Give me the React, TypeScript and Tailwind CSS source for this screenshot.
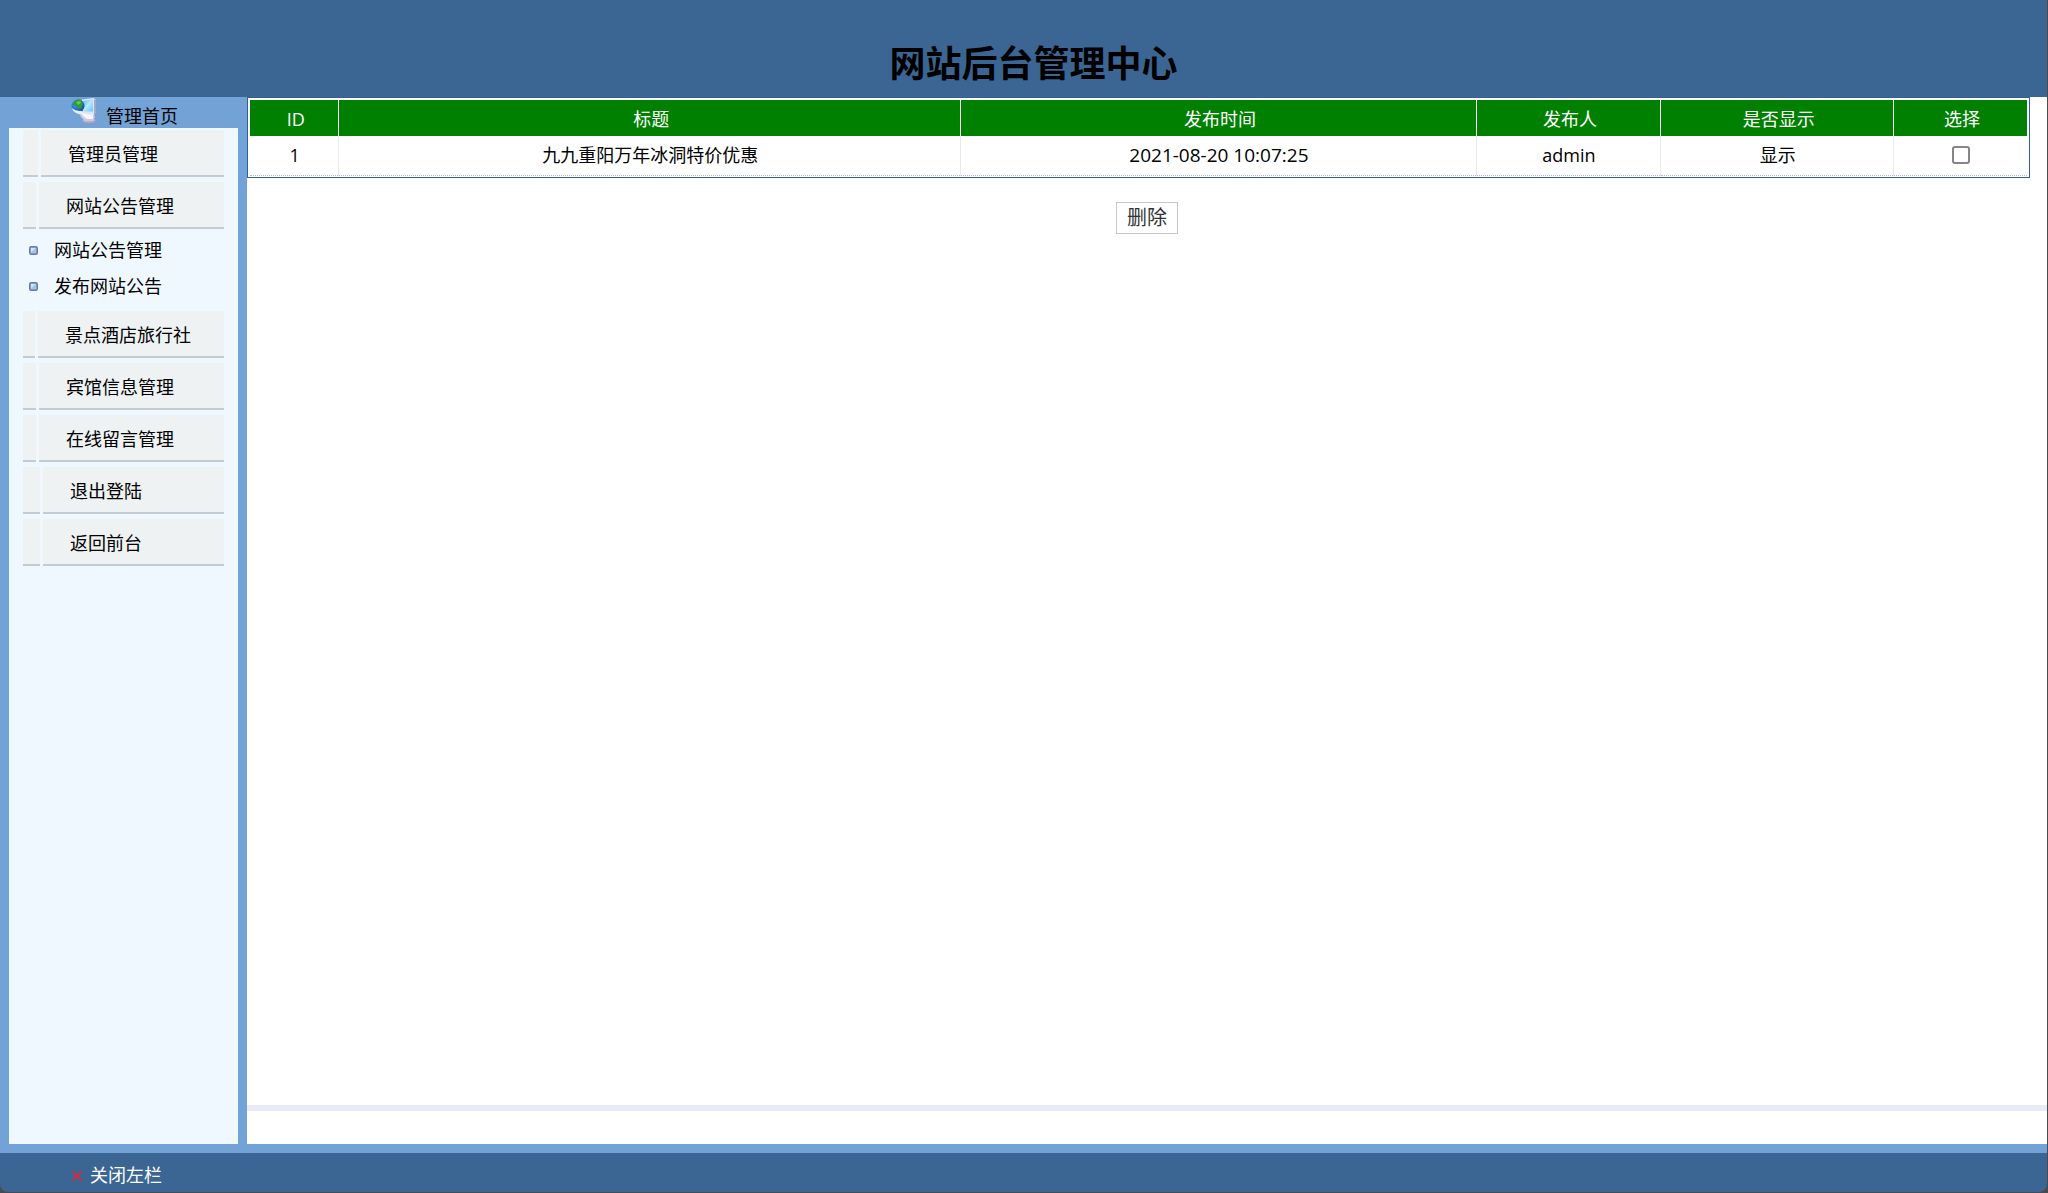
import { Fragment } from "react";

const MENU = [
  { label: "管理员管理", tab: "w-[15px]" },
  { label: "网站公告管理", tab: "w-[13px]", children: ["网站公告管理", "发布网站公告"] },
  { label: "景点酒店旅行社", tab: "w-[12px]" },
  { label: "宾馆信息管理", tab: "w-[13px]" },
  { label: "在线留言管理", tab: "w-[13px]" },
  { label: "退出登陆", tab: "w-[17px]" },
  { label: "返回前台", tab: "w-[17px]" },
];

const COLUMNS = [
  { label: "ID", width: "w-[5%]" },
  { label: "标题", width: "w-[35%]" },
  { label: "发布时间", width: "w-[29%]" },
  { label: "发布人", width: "w-[10.4%]" },
  { label: "是否显示", width: "w-[13.1%]" },
  { label: "选择", width: "w-[7.5%]" },
];

const NOTICES = [
  { id: 1, title: "九九重阳万年冰洞特价优惠", time: "2021-08-20 10:07:25", author: "admin", visible: "显示" },
];

function ComputerIcon() {
  return (
    <svg className="mt-[1px] size-[26px] shrink-0" viewBox="0 0 26 26" aria-hidden="true">
      <defs>
        <linearGradient id="screen" x1="0" y1="0" x2="1" y2="1">
          <stop offset="0" stopColor="#58b4f4" />
          <stop offset="0.5" stopColor="#b4e8fd" />
          <stop offset="1" stopColor="#6cc0f6" />
        </linearGradient>
        <radialGradient id="globe" cx="0.3" cy="0.35" r="0.8">
          <stop offset="0" stopColor="#3f9fe0" />
          <stop offset="0.6" stopColor="#1f66c4" />
          <stop offset="1" stopColor="#174a9c" />
        </radialGradient>
      </defs>
      {/* base and stand */}
      <ellipse cx="18" cy="22.500" rx="6.500" ry="2.500" fill="#c3a9bf" />
      <path d="M7 13l3 6 4 4 8 0 2-4-2-4z" fill="#cfc9e0" />
      <path d="M9 14l4 5 3 2 6 0 0-6z" fill="#f7f4fa" />
      {/* monitor */}
      <path d="M11 1.500l12-1.500 2 2v12l-2 3-11-1.500z" fill="#dbe5f4" />
      <path d="M23 1l2 1v12l-2 3z" fill="#9fa9cc" />
      <path d="M11.500 3l10.500-1.500v12l-9.500 0z" fill="url(#screen)" />
      {/* globe */}
      <circle cx="7" cy="8" r="6.500" fill="url(#globe)" />
      <path d="M3 4c2-3 6-3 8-1l1 4-2 3-3 1-1-3-4-1z" fill="#2f9a3a" />
      <path d="M5 4l4-1 1 2-3 2z" fill="#6cc94f" />
      <path d="M1 10c1 4 5 6 9 6l3-2-3-1c-4 0-7-1-9-3z" fill="#e4eefb" />
    </svg>
  );
}

function Bullet() {
  return (
    <svg className="size-[9px] shrink-0" viewBox="0 0 9 9" aria-hidden="true">
      <rect x="0.75" y="0.75" width="7.500" height="7.500" rx="1.500" fill="#a3c2f2" stroke="#68779f" strokeWidth="1.500" />
      <path d="M2 2h4.500L2 6.500z" fill="#d3e4fc" />
    </svg>
  );
}

function Sidebar() {
  return (
    <aside className="flex w-[247px] shrink-0 flex-col bg-[#72a2d6] px-[9px] pb-[9px]">
      <a href="#home" className="flex h-[31px] pl-[62px]">
        <ComputerIcon />
        <span className="pt-2 pl-[9px] leading-[22px]">管理首页</span>
      </a>
      <nav className="flex grow flex-col gap-[5px] bg-[#eff7ff] px-[14px] pt-[2px]">
        {MENU.map((item) => (
          <Fragment key={item.label}>
            <a href="#menu" className="flex h-[47px] gap-[3px]">
              <span className={`${item.tab} border-b-2 border-[#c5cbd2] bg-[#eef2f3]`} />
              <span className="flex grow items-center border-b-2 border-[#c5cbd2] bg-[#eef2f3] pt-[2px] pl-[27px]">
                {item.label}
              </span>
            </a>
            {item.children && (
              <ul className="-mt-[2px] pb-[2px]">
                {item.children.map((child) => (
                  <li key={child}>
                    <a href="#submenu" className="flex h-9 items-center gap-4 pl-[6px]">
                      <Bullet />
                      <span>{child}</span>
                    </a>
                  </li>
                ))}
              </ul>
            )}
          </Fragment>
        ))}
      </nav>
    </aside>
  );
}

function NoticeTable() {
  return (
    <div className="mr-[17px] border border-[#2f5f9e] bg-white p-[2px] pb-[1px]">
      <table className="w-full table-fixed border-collapse text-center">
        <thead>
          <tr className="h-9 bg-[#008000] text-white">
            {COLUMNS.map((col) => (
              <th key={col.label} className={`${col.width} border-r border-white pt-[2px] pl-[3px] font-normal last:border-r-0`}>
                {col.label}
              </th>
            ))}
          </tr>
        </thead>
        <tbody>
          {NOTICES.map((row) => (
            <tr key={row.id} className="h-[39px] border-b border-dotted border-[#a9b9d6] *:border-r *:border-solid *:border-r-[#e8e8f0] *:pl-[1px] *:last:border-r-0">
              <td>{row.id}</td>
              <td>{row.title}</td>
              <td className="text-[19px]">{row.time}</td>
              <td>{row.author}</td>
              <td>{row.visible}</td>
              <td>
                <input
                  type="checkbox"
                  aria-label="选择"
                  className="mx-auto block size-[18px] appearance-none rounded-[3px] border-2 border-[#858585] bg-white"
                />
              </td>
            </tr>
          ))}
        </tbody>
      </table>
    </div>
  );
}

export default function App() {
  return (
    <div className="min-h-screen bg-[#4a4a4f] pr-px pb-px font-['Open_Sans','Noto_Sans_CJK_SC',sans-serif] text-[18px] leading-6 text-black">
      <div className="flex min-h-[calc(100vh-1px)] flex-col overflow-hidden rounded-b-lg">
        <header className="flex h-[97px] items-center justify-center bg-[#3b6592] pt-[31px] pl-5">
          <h1 className="text-[36px] leading-[48px] font-bold">网站后台管理中心</h1>
        </header>

        <div className="flex grow">
          <Sidebar />
          <div className="flex grow flex-col">
            <main className="grow bg-white">
              <NoticeTable />
              <div className="flex justify-center pt-6">
                <button type="button" className="h-8 border border-[#c8c8c8] bg-white px-[10px] pt-[1px] text-[20px] text-[#333]">
                  删除
                </button>
              </div>
            </main>
            <div className="h-[39px] border-t-[6px] border-[#e8eaf8] bg-white" />
            <div className="h-[9px] bg-[#72a2d6]" />
          </div>
        </div>

        <footer className="flex h-[39px] items-center bg-[#3b6592] pt-[4px] pl-[72px] text-white">
          <button type="button" className="flex items-center gap-[8px]">
            <svg className="mt-[2px] size-[10px]" viewBox="0 0 10 10" aria-hidden="true">
              <path d="M0.500 0.500l9 9M9.500 0.500l-9 9" stroke="#ff1c28" strokeWidth="1.500" fill="none" />
            </svg>
            关闭左栏
          </button>
        </footer>
      </div>
    </div>
  );
}
